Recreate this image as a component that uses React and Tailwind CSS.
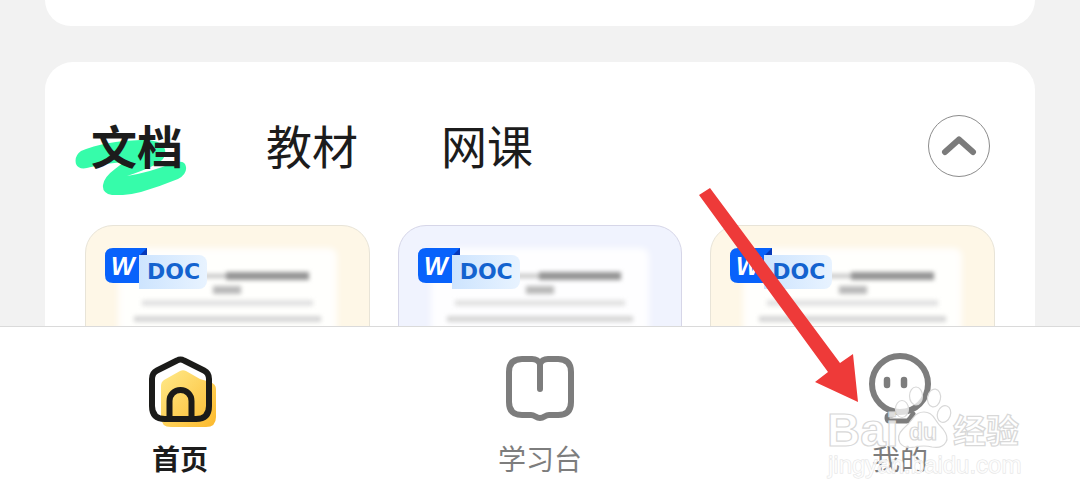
import React, { useState } from 'react';

const TABS = ['文档', '教材', '网课'];

const DOCS = [
  { id: 1, tone: 'bg-[#fef7e7] border-[#e8e4d8]' },
  { id: 2, tone: 'bg-[#f0f3fe] border-[#d6d6e8]' },
  { id: 3, tone: 'bg-[#fef7e7] border-[#e8e4d8]' },
];

const HomeIcon = () => (
  <svg viewBox="0 0 72 76" className="h-[76px] w-[72px]" fill="none" aria-hidden="true">
    <defs>
      <linearGradient id="homeFill" x1="0" y1="0" x2="1" y2="1">
        <stop offset="0" stopColor="#ffea8a" />
        <stop offset="1" stopColor="#fcb92c" />
      </linearGradient>
    </defs>
    <path
      d="M20 27 L36 18 Q39 16.5 42 18 L56 26 L66 29 Q72 31 72 36 L72 64 Q72 74 62 74 L27 74 Q17 74 17 64 L17 33 Q17 29 20 27 Z"
      fill="url(#homeFill)"
    />
    <path
      d="M13 17.5 L33 7.5 Q36.5 5.5 40 7.5 L60 17.5 Q65 20 65 26 L65 53 Q65 66 52 66 L21 66 Q8 66 8 53 L8 26 Q8 20 13 17.5 Z"
      stroke="#1b1b19"
      strokeWidth="6"
      strokeLinejoin="round"
    />
    <path d="M25.500 66 V48 a11 11 0 0 1 22 0 V66" stroke="#1b1b19" strokeWidth="6" />
  </svg>
);

const BookIcon = () => (
  <svg viewBox="0 0 72 76" className="h-[76px] w-[72px]" fill="none" stroke="#7d7d7d" strokeWidth="6" strokeLinecap="round" strokeLinejoin="round" aria-hidden="true">
    <path d="M36 11 Q34 6 28 6 H18 Q5 6 5 19 V49 Q5 62 18 62 H27 Q29 62 31.5 63.5 Q36 66.5 40.5 63.5 Q43 62 45 62 H54 Q67 62 67 49 V19 Q67 6 54 6 H44 Q38 6 36 11 V36" />
  </svg>
);

const FaceIcon = () => (
  <svg viewBox="0 0 72 76" className="h-[76px] w-[72px]" fill="none" stroke="#7d7d7d" strokeLinecap="round" strokeLinejoin="round" aria-hidden="true">
    <circle cx="36" cy="31" r="28" strokeWidth="6" />
    <path d="M23 27 V32 M40 27 V32" strokeWidth="6.5" />
    <path d="M28 59 V62 H25 Q23 62 23 65 Q23 68 26 68 H43 Q45 68 49 61" strokeWidth="5" />
  </svg>
);

const NAV = [
  { label: '首页', Icon: HomeIcon },
  { label: '学习台', Icon: BookIcon },
  { label: '我的', Icon: FaceIcon },
];

const DocCard = ({ tone }) => (
  <article className={`relative h-[380px] rounded-t-[28px] border px-8 pt-[22px] ${tone}`}>
    <div className="absolute inset-x-8 bottom-0 top-[22px] rounded-t-lg bg-white/90 blur-[3px]" />
    <div className="relative px-4 pt-6">
      <div className="flex flex-col blur-[2px]">
        <div className="ml-14 mr-3 flex items-center">
          <div className="h-1 w-9 bg-[#c4c4c4]" />
          <div className="h-2 flex-1 bg-[#949494]" />
        </div>
        <div className="mt-1.5 h-2 w-7 self-center bg-[#b9b9b9]" />
        <div className="mx-2 mt-1.5 h-1.5 bg-[#e2e2e2]" />
        <div className="mt-2.5 h-1.5 bg-[#d6d6d6]" />
      </div>
    </div>
    <div className="absolute left-[19px] top-[22px] flex items-start">
      <svg viewBox="0 0 42 36" className="h-9 w-[42px]" aria-hidden="true">
        <path d="M8 0 H42 V8 H35 V35 H8 Q0 35 0 27 V8 Q0 0 8 0 Z" fill="#0862fb" />
        <path d="M42 0 V8 H34 Z" fill="#0738b8" />
        <text x="6" y="27" fill="#ffffff" fontSize="25" fontWeight="700" fontStyle="italic" fontFamily="Liberation Sans, sans-serif">W</text>
      </svg>
      <span className="-ml-2 mt-[7px] h-[34px] w-[68px] rounded-r-lg bg-linear-to-r from-[#cde4fe] to-[#e8f3ff] pl-2 font-['DejaVu_Sans',sans-serif] text-[22px] leading-[34px] font-bold text-[#1463cf]">
        DOC
      </span>
    </div>
  </article>
);

// Outlined white lettering with the paw print between "Bai" and the characters
const Watermark = () => (
  <div className="pointer-events-none absolute bottom-5 right-[58px] w-[194px] text-white/80">
    <svg viewBox="0 0 194 66" className="block h-[66px] w-[194px] overflow-visible" fill="#ffffff" fillOpacity="0.75" stroke="#d8d8d8" strokeWidth="1.2" aria-hidden="true">
      <ellipse cx="74" cy="25" rx="6.5" ry="8.5" />
      <ellipse cx="88" cy="12" rx="6.5" ry="9" />
      <ellipse cx="106" cy="14" rx="6.5" ry="9" transform="rotate(10 106 14)" />
      <ellipse cx="116" cy="30" rx="6.5" ry="8.5" transform="rotate(20 116 30)" />
      <path d="M96 28 Q103 28 107 35 Q110 40 115 45 Q121 53 118 58 Q114 65 104 63 Q96 61 87 63 Q76 65 72 59 Q68 52 75 45 Q81 40 85 34 Q89 28 96 28 Z" />
      <g fontFamily="Liberation Sans, Noto Sans CJK SC, sans-serif" fontWeight="700">
        <text x="-1" y="62" fontSize="46">Bai</text>
        <text x="81" y="56" fontSize="23">du</text>
        <text x="125" y="59" fontSize="33" fontFamily="Noto Sans CJK SC, sans-serif">经验</text>
      </g>
    </svg>
    <p className="text-[24px] leading-[30px] [-webkit-text-stroke:1px_#e2e2e2] [paint-order:stroke_fill] font-['Liberation_Sans',sans-serif] whitespace-nowrap pb-0.5">
      jingyan.baidu.com
    </p>
  </div>
);

const Arrow = () => (
  <svg viewBox="0 0 162 216" className="pointer-events-none absolute bottom-[98px] right-[219px] h-[216px] w-[162px]" aria-hidden="true">
    <path d="M0 7 L11 0 L141 175 L154 166 L159 214 L116 194 L129 184 Z" fill="#ee3a39" />
  </svg>
);

export default function App() {
  const [tab, setTab] = useState(TABS[0]);
  const [page, setPage] = useState('首页');

  return (
    <div className="relative flex h-screen flex-col overflow-hidden bg-[#f2f2f2] font-['Noto_Sans_CJK_SC',sans-serif] text-[#1c1c1c]">
      <main className="min-h-0 flex-1 overflow-hidden px-[45px]">
        <section className="h-[26px] rounded-b-[28px] bg-white" />

        <section className="mt-9 rounded-t-[28px] bg-white px-10 pt-[53px]">
          <header className="flex items-center justify-between pl-1.5 pr-[5px]">
            <div className="flex gap-[83px]" role="tablist">
              {TABS.map((name) => (
                <button
                  key={name}
                  type="button"
                  role="tab"
                  aria-selected={tab === name}
                  onClick={() => setTab(name)}
                  className={`relative pb-1 text-[46px] leading-[58px] ${tab === name ? 'font-bold' : 'font-normal'}`}
                >
                  {tab === name && (
                    <svg viewBox="0 0 112 56" className="absolute -left-4 top-6 h-14 w-28" fill="#36fcaa" aria-hidden="true">
                      <path d="M6 12 Q30 2 66 1 Q84 0 89 8 Q92 14 88 20 Q82 27 52 37 Q76 33 98 24 Q110 20 111 28 Q112 35 103 40 Q86 47 66 53 Q50 57 37 56 Q27 54 28 46 Q29 38 40 30 L49 23 Q32 24 16 28 Q4 32 1 25 Q-1 17 6 12 Z" />
                    </svg>
                  )}
                  <span className="relative">{name}</span>
                </button>
              ))}
            </div>
            <button type="button" aria-label="收起" className="flex size-[62px] items-center justify-center rounded-full border border-[#8c8c8c]">
              <svg viewBox="0 0 36 20" className="h-5 w-9" fill="none" stroke="#7b7b7b" strokeWidth="6" strokeLinecap="round" strokeLinejoin="round" aria-hidden="true">
                <path d="M4 16 L18 3.5 L32 16" />
              </svg>
            </button>
          </header>

          <div className="mt-12 grid grid-cols-3 gap-7">
            {DOCS.map((doc) => (
              <DocCard key={doc.id} tone={doc.tone} />
            ))}
          </div>
        </section>
      </main>

      <nav className="grid shrink-0 grid-cols-3 border-t border-[#dadada] bg-white pb-6 pt-[26px]">
        {NAV.map(({ label, Icon }) => (
          <button
            key={label}
            type="button"
            onClick={() => setPage(label)}
            className={`flex flex-col items-center gap-[9px] text-[28px] leading-10 ${page === label ? 'font-bold text-[#1c1c1c]' : 'font-normal text-[#7d7d7d]'}`}
          >
            <Icon />
            {label}
          </button>
        ))}
      </nav>

      <Watermark />
      <Arrow />
    </div>
  );
}
